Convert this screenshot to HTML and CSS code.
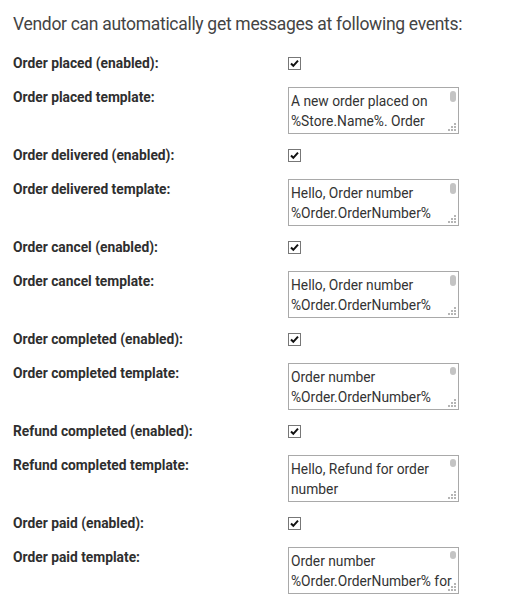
FILE: index.html
```html
<!DOCTYPE html>
<html>
<head>
<meta charset="utf-8">
<link rel="stylesheet" href="styles.css">
</head>
<body>
<div class="page">
  <h2 class="title">Vendor can automatically get messages at following events:</h2>
  <div class="rows">
    <div class="row row-check">
      <label class="lbl">Order placed (enabled):</label>
      <span class="check"><svg width="13" height="13" viewBox="0 0 13 13"><rect x="0.5" y="0.5" width="12" height="12" fill="#fff" stroke="#777"/><path d="M3 6.5 L5.3 8.8 L10 3.6" fill="none" stroke="#111" stroke-width="2"/></svg></span>
    </div>
    <div class="row row-text">
      <label class="lbl">Order placed template:</label>
      <div class="ta-wrap">
        <textarea class="ta" readonly>A new order placed on %Store.Name%. Order number: %Order.OrderNumber%. Customer: %Customer.FullName%. Order total: %Order.OrderTotal%.</textarea>
        <span class="thumb"></span>
        <svg class="grip" width="8" height="8" viewBox="0 0 8 8"><g fill="#b5b5b5"><rect x="6" y="0" width="2" height="2"/><rect x="3" y="3" width="2" height="2"/><rect x="6" y="3" width="2" height="2"/><rect x="0" y="6" width="2" height="2"/><rect x="3" y="6" width="2" height="2"/><rect x="6" y="6" width="2" height="2"/></g></svg>
      </div>
    </div>

    <div class="row row-check">
      <label class="lbl">Order delivered (enabled):</label>
      <span class="check"><svg width="13" height="13" viewBox="0 0 13 13"><rect x="0.5" y="0.5" width="12" height="12" fill="#fff" stroke="#777"/><path d="M3 6.5 L5.3 8.8 L10 3.6" fill="none" stroke="#111" stroke-width="2"/></svg></span>
    </div>
    <div class="row row-text">
      <label class="lbl">Order delivered template:</label>
      <div class="ta-wrap">
        <textarea class="ta" readonly>Hello, Order number %Order.OrderNumber% (placed at %Store.Name%) has been delivered to the customer. Thank you.</textarea>
        <span class="thumb"></span>
        <svg class="grip" width="8" height="8" viewBox="0 0 8 8"><g fill="#b5b5b5"><rect x="6" y="0" width="2" height="2"/><rect x="3" y="3" width="2" height="2"/><rect x="6" y="3" width="2" height="2"/><rect x="0" y="6" width="2" height="2"/><rect x="3" y="6" width="2" height="2"/><rect x="6" y="6" width="2" height="2"/></g></svg>
      </div>
    </div>

    <div class="row row-check">
      <label class="lbl">Order cancel (enabled):</label>
      <span class="check"><svg width="13" height="13" viewBox="0 0 13 13"><rect x="0.5" y="0.5" width="12" height="12" fill="#fff" stroke="#777"/><path d="M3 6.5 L5.3 8.8 L10 3.6" fill="none" stroke="#111" stroke-width="2"/></svg></span>
    </div>
    <div class="row row-text">
      <label class="lbl">Order cancel template:</label>
      <div class="ta-wrap">
        <textarea class="ta" readonly>Hello, Order number %Order.OrderNumber% (placed at %Store.Name%) has been cancelled. Thank you.</textarea>
        <span class="thumb"></span>
        <svg class="grip" width="8" height="8" viewBox="0 0 8 8"><g fill="#b5b5b5"><rect x="6" y="0" width="2" height="2"/><rect x="3" y="3" width="2" height="2"/><rect x="6" y="3" width="2" height="2"/><rect x="0" y="6" width="2" height="2"/><rect x="3" y="6" width="2" height="2"/><rect x="6" y="6" width="2" height="2"/></g></svg>
      </div>
    </div>

    <div class="row row-check">
      <label class="lbl">Order completed (enabled):</label>
      <span class="check"><svg width="13" height="13" viewBox="0 0 13 13"><rect x="0.5" y="0.5" width="12" height="12" fill="#fff" stroke="#777"/><path d="M3 6.5 L5.3 8.8 L10 3.6" fill="none" stroke="#111" stroke-width="2"/></svg></span>
    </div>
    <div class="row row-text">
      <label class="lbl">Order completed template:</label>
      <div class="ta-wrap">
        <textarea class="ta" readonly>Order number %Order.OrderNumber% (placed at %Store.Name%) has been completed. Thank you.</textarea>
        <span class="thumb thumb-sm"></span>
        <svg class="grip" width="8" height="8" viewBox="0 0 8 8"><g fill="#b5b5b5"><rect x="6" y="0" width="2" height="2"/><rect x="3" y="3" width="2" height="2"/><rect x="6" y="3" width="2" height="2"/><rect x="0" y="6" width="2" height="2"/><rect x="3" y="6" width="2" height="2"/><rect x="6" y="6" width="2" height="2"/></g></svg>
      </div>
    </div>

    <div class="row row-check">
      <label class="lbl">Refund completed (enabled):</label>
      <span class="check"><svg width="13" height="13" viewBox="0 0 13 13"><rect x="0.5" y="0.5" width="12" height="12" fill="#fff" stroke="#777"/><path d="M3 6.5 L5.3 8.8 L10 3.6" fill="none" stroke="#111" stroke-width="2"/></svg></span>
    </div>
    <div class="row row-text">
      <label class="lbl">Refund completed template:</label>
      <div class="ta-wrap">
        <textarea class="ta" readonly>Hello, Refund for order number %Order.OrderNumber% has been completed. Refunded amount: %Order.RefundedAmount%.</textarea>
        <span class="thumb thumb-sm"></span>
        <svg class="grip" width="8" height="8" viewBox="0 0 8 8"><g fill="#b5b5b5"><rect x="6" y="0" width="2" height="2"/><rect x="3" y="3" width="2" height="2"/><rect x="6" y="3" width="2" height="2"/><rect x="0" y="6" width="2" height="2"/><rect x="3" y="6" width="2" height="2"/><rect x="6" y="6" width="2" height="2"/></g></svg>
      </div>
    </div>

    <div class="row row-check">
      <label class="lbl">Order paid (enabled):</label>
      <span class="check"><svg width="13" height="13" viewBox="0 0 13 13"><rect x="0.5" y="0.5" width="12" height="12" fill="#fff" stroke="#777"/><path d="M3 6.5 L5.3 8.8 L10 3.6" fill="none" stroke="#111" stroke-width="2"/></svg></span>
    </div>
    <div class="row row-text">
      <label class="lbl">Order paid template:</label>
      <div class="ta-wrap">
        <textarea class="ta" readonly>Order number %Order.OrderNumber% for %Store.Name% has been paid. Thank you.</textarea>
        <span class="thumb thumb-sm"></span>
        <svg class="grip" width="8" height="8" viewBox="0 0 8 8"><g fill="#b5b5b5"><rect x="6" y="0" width="2" height="2"/><rect x="3" y="3" width="2" height="2"/><rect x="6" y="3" width="2" height="2"/><rect x="0" y="6" width="2" height="2"/><rect x="3" y="6" width="2" height="2"/><rect x="6" y="6" width="2" height="2"/></g></svg>
      </div>
    </div>
  </div>
</div>
</body>
</html>
```

FILE: styles.css
```css
html, body {
  margin: 0;
  padding: 0;
  background: #fff;
}
body {
  font-family: Roboto, "Liberation Sans", sans-serif;
  color: #333;
}
.page {
  padding: 12px 0 0 13px;
}
.title {
  margin: 0 0 17px 0;
  font-size: 17.5px;
  letter-spacing: -0.3px;
  line-height: 24px;
  font-weight: 400;
  color: #444;
}
.rows {
  display: flex;
  flex-direction: column;
}
.row {
  display: grid;
  grid-template-columns: 275px 171px;
  align-items: start;
}
.row-check {
  height: 20px;
  margin-bottom: 14px;
}
.row-text {
  margin-bottom: 11px;
}
.lbl {
  font-size: 13.8px;
  line-height: 20px;
  font-weight: 700;
  color: #2f2f2f;
}
.check {
  display: block;
  width: 13px;
  height: 13px;
  margin-top: 4px;
}
.check svg {
  display: block;
}
.ta-wrap {
  position: relative;
  width: 171px;
  height: 47px;
}
.ta {
  display: block;
  box-sizing: border-box;
  width: 171px;
  height: 47px;
  margin: 0;
  padding: 3px 2px 0 2px;
  border: 1px solid #a9a9a9;
  border-radius: 0;
  font-family: Roboto, "Liberation Sans", sans-serif;
  font-size: 13.8px;
  line-height: 20px;
  color: #333;
  background: #fff;
  overflow: hidden;
  resize: none;
  outline: none;
}
.thumb {
  position: absolute;
  top: 4px;
  right: 3px;
  width: 6px;
  height: 11px;
  border-radius: 3px;
  background: #c4c4c4;
}
.thumb-sm {
  height: 8px;
}
.grip {
  position: absolute;
  right: 3px;
  bottom: 3px;
}
```
